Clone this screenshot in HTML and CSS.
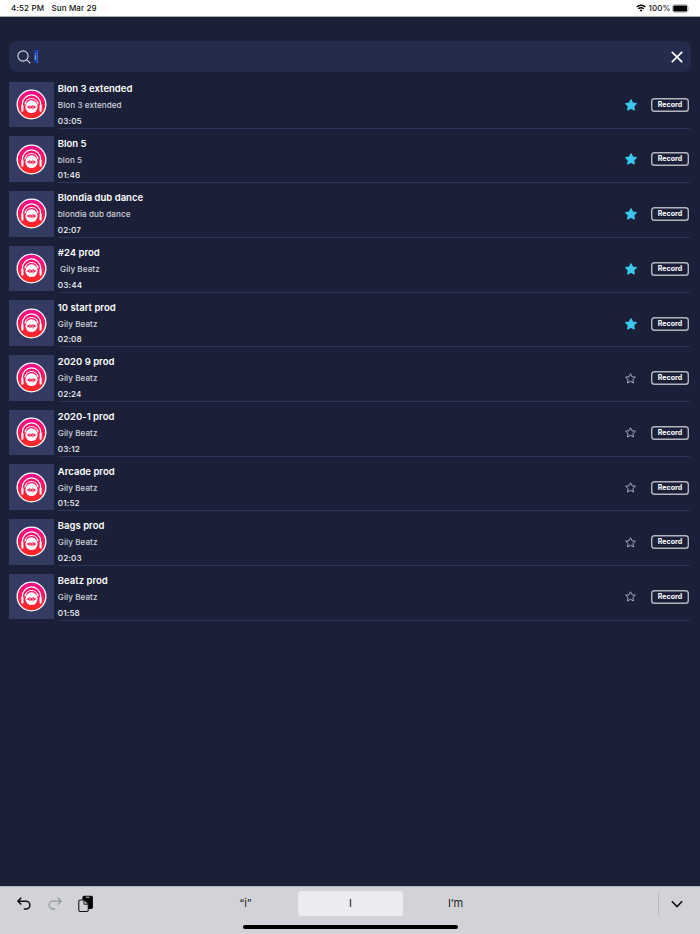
FILE: index.html
```html
<!DOCTYPE html>
<html lang="en">
<head>
<meta charset="utf-8">
<title>Beats</title>
<link rel="stylesheet" href="styles.css">
</head>
<body>
<svg class="defs" aria-hidden="true">
  <defs>
    <linearGradient id="disc" x1="0" y1="0" x2="0" y2="1"><stop offset="0" stop-color="#f50a91"/><stop offset="1" stop-color="#ff2b1c"/></linearGradient>
    <symbol id="cover" viewBox="0 0 32 32">
      <circle cx="16" cy="16" r="14.8" fill="url(#disc)" stroke="#fff" stroke-width="1.4"/>
      <g fill="none" stroke="#fff">
        <path d="M6.600 18v-2.200a9.400 9.800 0 0 1 18.800 0V18" stroke-width="1.200"/>
        <path d="M9.200 15.800a6.900 7.200 0 0 1 13.600 0" stroke-width="1.200"/>
        <path d="M6.600 17v5.500M25.400 17v5.500" stroke-width="2.200" stroke-linecap="round"/>
      </g>
      <ellipse cx="16" cy="18.300" rx="6.300" ry="6.600" fill="#fff"/>
      <path d="M11.200 18.600h9.600M12.800 17.400v2.400M14.400 16.700v4M16 17.600v2.500M17.600 16.500v4.600M19.200 17.400v2.400" stroke="#f51f52" stroke-width="1" fill="none"/>
    </symbol>
    <symbol id="star" viewBox="0 0 12 12"><path d="M6 .8 7.600 4.100l3.700.5-2.700 2.600.7 3.700L6 9.100l-3.300 1.800.7-3.700L.7 4.600l3.700-.5z" stroke-linejoin="round"/></symbol>
  </defs>
</svg>
<div class="screen">
  <header class="status">
    <span class="clock">4:52 PM</span><span class="date">Sun Mar 29</span>
    <svg class="wifi" viewBox="0 0 10 8"><g fill="none" stroke="#000" stroke-width="1.3"><path d="M.6 3.1a6.2 6.2 0 0 1 8.8 0"/><path d="M2.3 4.9a3.8 3.8 0 0 1 5.4 0"/></g><path d="M5 7.7 3.6 6.2a2 2 0 0 1 2.8 0z"/></svg>
    <span class="percent">100%</span>
    <svg class="battery" viewBox="0 0 18 9"><rect x=".5" y=".7" width="15.4" height="7.5" rx="2" fill="none" stroke="#999" stroke-width=".7"/><rect x="1.3" y="1.4" width="13.8" height="6.1" rx="1.2"/><path d="M16.7 3.1q1.2 1.3 0 2.7z" fill="#888"/></svg>
  </header>
  <div class="search">
    <svg class="glass" viewBox="0 0 14 14"><circle cx="6" cy="6" r="5.1"/><path d="m9.7 9.7 3.6 3.6"/></svg>
    <span class="query">i</span>
    <svg class="clear" viewBox="0 0 12 12"><path d="m.8.8 10.4 10.4M11.2.8.8 11.2"/></svg>
  </div>
  <main class="list">
    <article class="row"><div class="thumb"><svg><use href="#cover"/></svg></div><div class="info"><div class="text"><h2>Blon 3 extended</h2><p class="artist">Blon 3 extended</p><p class="time">03:05</p></div><svg class="star on"><use href="#star"/></svg><button>Record</button></div></article>
    <article class="row"><div class="thumb"><svg><use href="#cover"/></svg></div><div class="info"><div class="text"><h2>Blon 5</h2><p class="artist">blon 5</p><p class="time">01:46</p></div><svg class="star on"><use href="#star"/></svg><button>Record</button></div></article>
    <article class="row"><div class="thumb"><svg><use href="#cover"/></svg></div><div class="info"><div class="text"><h2>Blondia dub dance</h2><p class="artist">blondia dub dance</p><p class="time">02:07</p></div><svg class="star on"><use href="#star"/></svg><button>Record</button></div></article>
    <article class="row"><div class="thumb"><svg><use href="#cover"/></svg></div><div class="info"><div class="text"><h2>#24 prod</h2><p class="artist"> Gily Beatz</p><p class="time">03:44</p></div><svg class="star on"><use href="#star"/></svg><button>Record</button></div></article>
    <article class="row"><div class="thumb"><svg><use href="#cover"/></svg></div><div class="info"><div class="text"><h2>10 start prod</h2><p class="artist">Gily Beatz</p><p class="time">02:08</p></div><svg class="star on"><use href="#star"/></svg><button>Record</button></div></article>
    <article class="row"><div class="thumb"><svg><use href="#cover"/></svg></div><div class="info"><div class="text"><h2>2020 9 prod</h2><p class="artist">Gily Beatz</p><p class="time">02:24</p></div><svg class="star"><use href="#star"/></svg><button>Record</button></div></article>
    <article class="row"><div class="thumb"><svg><use href="#cover"/></svg></div><div class="info"><div class="text"><h2>2020-1 prod</h2><p class="artist">Gily Beatz</p><p class="time">03:12</p></div><svg class="star"><use href="#star"/></svg><button>Record</button></div></article>
    <article class="row"><div class="thumb"><svg><use href="#cover"/></svg></div><div class="info"><div class="text"><h2>Arcade prod</h2><p class="artist">Gily Beatz</p><p class="time">01:52</p></div><svg class="star"><use href="#star"/></svg><button>Record</button></div></article>
    <article class="row"><div class="thumb"><svg><use href="#cover"/></svg></div><div class="info"><div class="text"><h2>Bags prod</h2><p class="artist">Gily Beatz</p><p class="time">02:03</p></div><svg class="star"><use href="#star"/></svg><button>Record</button></div></article>
    <article class="row"><div class="thumb"><svg><use href="#cover"/></svg></div><div class="info"><div class="text"><h2>Beatz prod</h2><p class="artist">Gily Beatz</p><p class="time">01:58</p></div><svg class="star"><use href="#star"/></svg><button>Record</button></div></article>
  </main>
  <footer class="keyboard">
    <div class="bar">
      <div class="tools">
        <svg class="undo" viewBox="0 0 14 13"><path d="M4.2.8.9 4.2l3.3 3.3M1 4.2h8a3.9 3.9 0 0 1 0 7.8H6.8"/></svg>
        <svg class="undo redo" viewBox="0 0 14 13"><path d="M9.8.8l3.3 3.4-3.3 3.3M13 4.2H5A3.9 3.9 0 0 0 5 12h2.2"/></svg>
        <svg class="paste" viewBox="0 0 16 18"><rect x="4.6" y=".4" width="10.800" height="13.800" rx="1.8"/><path d="M8 2h4" stroke="#c8cacf" stroke-width="1"/><path d="M2.4 4.8h4.2l4 4v6.4a1.6 1.6 0 0 1-1.6 1.6H2.4a1.6 1.6 0 0 1-1.6-1.6V6.400a1.600 1.600 0 0 1 1.600-1.600z" fill="#d1d3d9" stroke="#111" stroke-width="1.100"/><path d="M6.200 5v4.200h4.200" fill="none" stroke="#111" stroke-width="1"/></svg>
      </div>
      <div class="words"><span>“i”</span><span class="picked">I</span><span>I’m</span></div>
      <div class="hide"><svg viewBox="0 0 12 8"><path d="m.8 1.200 5.200 5.300 5.200-5.300"/></svg></div>
    </div>
    <div class="home"></div>
  </footer>
</div>
</body>
</html>
```

FILE: styles.css
```css
* { box-sizing: border-box; }
body { margin: 0; background: #1b2038; font-family: Inter, "Liberation Sans", sans-serif; }
h2, p { margin: 0; }
svg { display: block; flex: none; }
.defs { position: absolute; width: 0; height: 0; }
.screen { width: 700px; height: 934px; display: flex; flex-direction: column; overflow: hidden; }

.status { height: 16.5px; flex: none; display: flex; align-items: center; padding: 1px 11px 0; background: #fff; color: #111; font-size: 8px; line-height: 15px; font-weight: 500; border-bottom: 0.5px solid #aaa; white-space: nowrap; }
.clock { width: 40.5px; letter-spacing: 0.15px; }
.date { letter-spacing: 0.12px; }
.wifi { width: 10px; height: 8px; margin-left: auto; }
.percent { width: 22px; margin: 0 1.5px 0 2.5px; letter-spacing: 0.1px; }
.battery { width: 18px; height: 9px; margin-right: -1px; }

.search { height: 31px; flex: none; margin: 24.7px 9px 0; padding: 0 8px; border-radius: 8px; background: #242b4c; display: flex; align-items: center; }
.glass { width: 14px; height: 14px; fill: none; stroke: #d5d7df; stroke-width: 1.1; }
.query { margin-left: 3px; width: 3.5px; height: 13px; line-height: 13px; font-size: 9px; color: #b8c4e4; background: #1b3c8c; border-right: 1px solid #2b62ee; display: flex; justify-content: center; }
.clear { width: 12px; height: 12px; margin-left: auto; fill: none; stroke: #fff; stroke-width: 1.7; }

.list { padding: 1.8px 10px 0 9px; }
.row { height: 54.68px; display: flex; }
.thumb { width: 44.6px; height: 45.6px; margin-top: 7.7px; background: #343b62; display: flex; align-items: center; justify-content: center; }
.thumb svg { width: 31px; height: 31px; }
.info { flex: 1; margin-left: 4.2px; display: flex; align-items: center; padding: 8px 1px 0 0; border-bottom: 1px solid #283458; }
.text { flex: 1; white-space: pre; align-self: flex-start; margin-top: -1px; }
h2 { font-size: 9.5px; line-height: 15px; font-weight: 600; color: #fff; letter-spacing: 0.02px; }
.artist { font-size: 8.1px; line-height: 12px; margin-top: 3px; color: #d0d2dc; font-weight: 500; letter-spacing: 0.07px; }
.time { font-size: 8.2px; line-height: 12px; margin-top: 3.7px; color: #f4f5f8; font-weight: 500; letter-spacing: 0.15px; }
.star { width: 11px; height: 11px; margin-right: 15px; fill: none; stroke: #b4b8c5; stroke-width: 1; }
.star.on { width: 12px; height: 12px; margin-right: 14.5px; fill: #3bc8ee; stroke: #3bc8ee; stroke-width: 1.2; }
button { width: 38px; height: 14px; padding: 0; border: 0; border-radius: 3.5px; box-shadow: inset 0 0 0 1.4px #b3b5be; background: transparent; color: #fff; font: 700 7px/14px Inter, sans-serif; letter-spacing: 0.08px; }

.keyboard { margin-top: auto; height: 48px; flex: none; background: #d1d3d9; border-top: 1px solid #aeb0ba; display: flex; flex-direction: column; align-items: center; }
.bar { width: 100%; height: 33px; display: grid; grid-template-columns: 193px 1fr 42px; align-items: center; }
.tools { display: flex; align-items: center; padding-left: 17px; }
.undo { width: 14px; height: 13px; margin-right: 17px; fill: none; stroke: #111; stroke-width: 1.5; }
.redo { stroke: #96989d; margin-right: 16px; stroke-width: 1.3; }
.paste { width: 15.5px; height: 18px; }
.words { display: grid; grid-template-columns: 105px 105px 105px; font-size: 11px; color: #222; text-align: center; line-height: 25px; }
.picked { background: #ebecf0; border-radius: 3px; }
.hide { height: 22px; border-left: 1px solid #b5b7bc; display: flex; align-items: center; padding-left: 12px; }
.hide svg { width: 12px; height: 8px; fill: none; stroke: #111; stroke-width: 1.6; }
.home { width: 215px; height: 4px; margin-top: 4.5px; border-radius: 2px; background: #000; }
```
